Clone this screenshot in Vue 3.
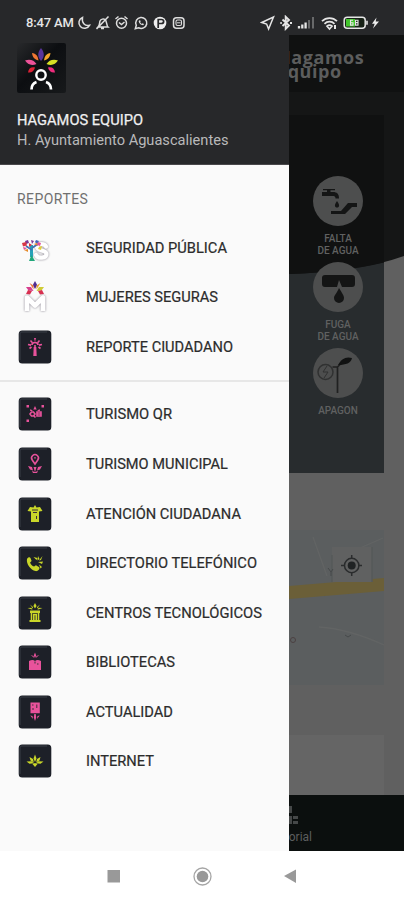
<script setup>
const pink = '#e8529b'
const lime = '#c9d629'

// Every menu glyph is drawn on a 34 x 34 grid.
const reportItems = [
  { label: 'SEGURIDAD PÚBLICA', width: 141, kind: 'tree' },
  { label: 'MUJERES SEGURAS', width: 132, kind: 'letter' },
  {
    label: 'REPORTE CIUDADANO', width: 147, kind: 'tile', color: pink,
    fill: 'M15.7 17h2.6l.4 9h-3.4z M16 8h2l-1 4z',
    line: 'M17 18v-3 M12.5 10.5l1.7 2 M21.5 10.5l-1.7 2 M10 14.5l3 .6 M24 14.5l-3 .6 M11.5 18.5l2-1.5 M22.5 18.5l-2-1.5 M14 15a3 2.5 0 0 1 6 0'
  }
]
const serviceItems = [
  {
    label: 'TURISMO QR', width: 86, kind: 'tile', color: pink,
    fill: 'M8.500 8h2.500v2.500H8.500z M23.500 8h2.500v2.500h-2.500z M8.500 22.500h2.500V25H8.500z M17 9l1.700 3.500h-3.400z M12.500 12l2.500 2h-3z M21.500 12l.500 2h-3z',
    line: 'M15.500 15h-2l-1.500 2 1.500 2h2l1.500-2z M16 19l1.500 1.500 M19 15h4v4h-4z M18.500 17h4.500'
  },
  {
    label: 'TURISMO MUNICIPAL', width: 142, kind: 'tile', color: pink,
    fill: 'M15.500 20l1.500 5 1.500-5z M10 19l4 1 1 3.500-3-1z M24 19l-4 1-1 3.500 3-1z M14 24l3 1 3-1-1 2h-4z',
    line: 'M17 17l-2.800-4a3.400 3.400 0 1 1 5.600 0z M17 10.200v1.200'
  },
  {
    label: 'ATENCIÓN CIUDADANA', width: 155, kind: 'tile', color: lime,
    fill: 'M17 8l1.500 2.500 3.500-.5 2.500 4-3.500.500V25h-8V14.500L9.500 14l2.500-4 3.500.500z',
    line: '',
    cut: 'M14 13h6 M15 15.500h4 M18.500 19v3'
  },
  {
    label: 'DIRECTORIO TELEFÓNICO', width: 171, kind: 'tile', color: lime,
    fill: 'M9 13c1-2 3-2.400 3.600-.8l1 2.800-1.500 1.400c.7 2 2 3.400 4 4.200l1.800-1.300 3.400 2c.7 2-1.200 4.100-3.800 3.800C12.700 24 8 18 9 13z M15.500 11l4 1-1 2z M20 10l1.500 3-2 1.500z M24.500 10l-1.500 4-2 .5z M20 16l5-.5-1 2.500z M21 18.500l3 2.500-1.500 1.500z',
    line: ''
  },
  {
    label: 'CENTROS TECNOLÓGICOS', width: 176, kind: 'tile', color: lime,
    fill: 'M17 7l1.600 3L17 12.500 15.400 10z M12 8.500l3 2.500v1.800z M22 8.500l-3 2.500v1.800z M9.500 12l4-.2 1 2z M24.500 12l-4-.2-1 2z M12 14.500h10V17H12z M11.500 24h11v2h-11z',
    line: 'M13.500 17v7 M20.500 17v7 M15.800 24v-5.500h2.400V24'
  },
  {
    label: 'BIBLIOTECAS', width: 89, kind: 'tile', color: pink,
    fill: 'M17 7.500l1.200 3L17 13l-1.200-2.500z M12.700 10l2.800 1 .7 2z M21.300 10l-2.800 1-.7 2z M11 16c2.500-1.500 4.500-1.500 6 0 1.500-1.500 3.500-1.500 6 0v9H11z',
    line: '',
    cut: 'M17 16.500v2 M19 19h1.500'
  },
  {
    label: 'ACTUALIDAD', width: 87, kind: 'tile', color: pink,
    fill: 'M12.500 7.500h9.300v10.700h-9.300z M16.300 19h1.400l.5 3.500L17 26l-1.200-3.500z M12.300 20.500l2.200.5.500 3z M21.700 20.500l-2.200.5-.5 3z',
    line: '',
    cut: 'M14 10h1.500 M18.800 9.500v3.500 M14 14h2'
  },
  {
    label: 'INTERNET', width: 68, kind: 'tile', color: lime,
    fill: 'M17 10.500l1.500 4L17 18l-1.500-3.500z M11.500 13l3.500 2 .8 3.500-3.300-2z M22.500 13L19 15l-.8 3.500 3.300-2z M8.500 17.500l5-.3 2.500 2-4.500.5z M25.500 17.500l-5-.3-2.500 2 4.500.5z M14.500 20l2.500-1 2.500 1-2.500 3z',
    line: ''
  }
]
const groups = [
  { id: 'reports', title: 'REPORTES', items: reportItems },
  { id: 'services', title: '', items: serviceItems }
]
const quickReports = [
  { id: 'tap', lines: ['FALTA', 'DE AGUA'] },
  { id: 'leak', lines: ['FUGA', 'DE AGUA'] },
  { id: 'lamp', lines: ['APAGON'] }
]
</script>

<template>
  <div class="phone">
    <div class="status">
      <div class="status-left">
        <span class="clock">8:47 AM</span>
        <svg width="111" height="16" viewBox="0 0 111 16" fill="none" stroke="#dedede" stroke-width="1.500">
          <path d="M6.500 2.500a5.600 5.600 0 1 0 7 7.800C8.700 11.500 5.500 7.500 6.500 2.500z" />
          <path d="M22 12h10c-1.600-1.500-1-6-3-7.500-1.500-1-4-.5-5 1.500-.7 2 0 4-2 6z M25 13.500h3 M20.500 14L32.500 1.500" />
          <circle cx="45.500" cy="8.300" r="5" />
          <path d="M39.500 4l3-2.500 M51.500 4l-3-2.500 M43 7.500l2.500 2 3-2.500" />
          <path d="M59.300 13.700l1-3.500a5.500 5.500 0 1 1 2.300 2.500z" />
          <path d="M62.700 6c0 2 2.500 4.500 4.600 4.200l.7-1.200-1.500-.8-.8.700-1.600-1.700.6-.8-.7-1.400z" fill="#dedede" stroke="none" />
          <circle cx="84" cy="8" r="6.300" fill="#eee" stroke="none" />
          <path d="M82.200 13V4.500h3.200c3 0 3 4 0 4H83" stroke="#27282a" stroke-width="1.700" />
          <rect x="97.500" y="2.700" width="10.500" height="10.600" rx="3" />
          <rect x="100" y="5" width="5.500" height="5.500" rx="1.500" stroke-width="1.100" />
          <path d="M101 7.800h3.500" stroke-width="1" />
        </svg>
      </div>
      <svg class="status-right" width="120" height="16" viewBox="0 0 120 16" fill="none" stroke="#e5e5e5" stroke-width="1.500">
        <path d="M1.700 7.500L13.500 2 8.600 14l-2-5z" />
        <path d="M22.500 4.500l6.500 6-3.300 3.300V1.800L29 5l-6.500 6 M20.300 8h1.500 M30 8h2" stroke-width="1.900" />
        <path d="M39 11v2.500 M42.300 9.500v4 M45.600 7.500v6" stroke-width="2.300" />
        <path d="M49 5v8.500 M53 2v11.500" stroke="#68696a" stroke-width="2" />
        <path d="M62 6.200a10.500 10.500 0 0 1 15 0 M64.500 8.800a7 7 0 0 1 10 0 M67 11.200a4 4 0 0 1 5 0L69.500 14z" stroke-width="1.700" />
        <path d="M75 10v4" stroke-width="2" />
        <rect x="84.200" y="2.200" width="21" height="11" rx="3" fill="#172116" />
        <path d="M86 4h9v7.500h-9z" fill="#42c52c" stroke="none" />
        <path d="M93 5.300h-2.500v4.800H93V7.800h-2.500 M95.500 5.300H98v4.800h-2.500z M95.500 7.600H98" stroke-width="1.100" />
        <path d="M107 5.800v4" stroke-width="1.600" />
        <path d="M116.500 2.500L112 8.700h2.700L113 13.500l6-7h-3.300z" fill="#eee" stroke="none" />
      </svg>
    </div>

    <div class="screen">
      <aside class="drawer">
        <header class="account">
          <svg class="logo" width="49" height="50" viewBox="0 0 49 50">
            <defs>
              <linearGradient id="logoShade" x1="0" y1="0" x2="1" y2="1">
                <stop offset="0" stop-color="#28292b" />
                <stop offset=".45" stop-color="#0c0e11" />
                <stop offset="1" stop-color="#17191b" />
              </linearGradient>
            </defs>
            <rect width="49" height="50" rx="2" fill="url(#logoShade)" />
            <path d="M24 5c3.800 5 3.600 9 0 13-3.600-4-3.800-8 0-13z" fill="#59349b" />
            <path d="M15 10c4 .5 6 3 6.500 7.500-4-.8-6-3.500-6.500-7.500z" fill="#ef7733" />
            <path d="M33.500 10c-4 .5-6 3-6.500 7.500 4-.8 6-3.500 6.500-7.500z" fill="#f4a62a" />
            <path d="M8 17.500c5-1.800 9-.3 11.500 3.500-5 2-9 .5-11.500-3.500z" fill="#ed5299" />
            <path d="M41 17.500c-5-1.800-9-.3-11.500 3.500 5 2 9 .5 11.500-3.500z" fill="#d7e124" />
            <path d="M11 29.500c.5-4 3-5.800 7-5-1 4-3.500 5.500-7 5z" fill="#db2135" />
            <path d="M38 29.500c-.5-4-3-5.800-7-5 1 4 3.500 5.500 7 5z" fill="#ee2c7d" />
            <circle cx="24" cy="32" r="4.700" fill="none" stroke="#fff" stroke-width="2.400" />
            <path d="M14.500 46.500c0-4 2-6.500 5-7.500M34 46.500c0-4-2-6.500-5-7.500" fill="none" stroke="#fff" stroke-width="2.700" />
          </svg>
          <h1><svg class="fit" width="127" height="18"><text x="0" y="13.500" textLength="126" lengthAdjust="spacingAndGlyphs">HAGAMOS EQUIPO</text></svg></h1>
          <p><svg class="fit" width="213" height="19"><text x="0" y="14" textLength="211.500" lengthAdjust="spacingAndGlyphs">H. Ayuntamiento Aguascalientes</text></svg></p>
        </header>

        <nav v-for="group in groups" :key="group.id" class="group" :class="group.id">
          <h2 v-if="group.title">{{ group.title }}</h2>
          <a v-for="item in group.items" :key="item.label" class="item">
            <svg class="glyph" width="34" height="34" viewBox="0 0 34 34">
              <g v-if="item.kind === 'tree'" transform="translate(0 5)">
                <path class="raised" d="M28 10.500c-1-3-9-3.500-9 .5 0 4.500 9.500 2.500 9.500 7 0 4.500-8.500 5-10.500 1" fill="none" stroke="#fff" stroke-width="4.200" stroke-linecap="round" />
                <path d="M13.500 21V9" stroke="#28a1b8" stroke-width="3" />
                <path d="M14 14l-6-4 M14 12l6-4" stroke="#3f70b5" stroke-width="1.700" />
                <path d="M11 25l2.500-6 3.500 6z" fill="#22a77a" />
                <path d="M7 5l3-1 1 3-3 1z M13 4l3 1-2 3z" fill="#7c3795" />
                <path d="M4 7l4-1 1 3.500-4 1z M11 7l3 2-3 2z" fill="#d83546" />
                <path d="M18 4l3 1-2 3-2-2z" fill="#4265bb" />
                <path d="M16 8l3-1 1 3z M6 14l4-1v3z" fill="#e68c2e" />
                <path d="M20 6l3 1-1 3-3-1z M5 11l4 1-3 2z" fill="#df539c" />
                <path d="M21 11l3-1-1 4-3-1z" fill="#e5cf3c" />
              </g>
              <template v-else-if="item.kind === 'letter'">
                <path d="M17 1l2.200 4-2.200 4-2.200-4z" fill="#512d91" />
                <path d="M11.500 3l4 2.500v4z" fill="#eb793a" />
                <path d="M22.500 3l-4 2.500v4z" fill="#e6a334" />
                <path d="M8 7l5 0 2.500 4-5-.5z" fill="#d63f8e" />
                <path d="M26 7l-5 0-2.500 4 5-.5z" fill="#cfcb34" />
                <path d="M8 14l2-4 4 1-2 3.500z M26 14l-2-4-4 1 2 3.500z" fill="#d93051" />
                <path class="raised" d="M9 31V17.500l8 8 8-8V31" fill="none" stroke="#fff" stroke-width="4.600" stroke-linejoin="round" />
              </template>
              <template v-else>
                <rect x=".7" y=".5" width="32.600" height="33" rx="3.500" fill="#1d2028" />
                <path d="M2 30V4q0-2 2-2h25" fill="none" stroke="#30343d" stroke-width="1.500" />
                <path :d="item.fill" :fill="item.color" />
                <path :d="item.line" fill="none" :stroke="item.color" stroke-width="1.600" />
                <path v-if="item.cut" :d="item.cut" fill="none" stroke="#3b3039" stroke-width="1" />
              </template>
            </svg>
            <svg class="fit label" :width="item.width + 2" height="20">
              <text x="0" y="15" :textLength="item.width" lengthAdjust="spacingAndGlyphs">{{ item.label }}</text>
            </svg>
          </a>
        </nav>
      </aside>

      <main class="page">
        <header class="topbar">
          <span>Hagamos</span>
          <span>Equipo</span>
        </header>
        <div class="content">
          <svg class="curve" width="115" height="381" viewBox="0 0 115 381">
            <path d="M0 23h95v358H0z" fill="#282c2e" />
            <path d="M0 0h115v164Q70 180 0 182z" fill="#151616" />
            <path d="M0 23h95v147.500Q55 180 0 182z" fill="#101111" />
          </svg>
          <section class="quick">
            <div v-for="quick in quickReports" :key="quick.id" class="quick-item">
              <svg width="50" height="50" viewBox="0 0 50 50">
                <circle cx="25" cy="25" r="25" fill="#4d4e4e" />
                <g v-if="quick.id === 'tap'" fill="#141515">
                  <path d="M10 13h12v1.200h-4.500V16H20c4 0 6 2 6 6.500h-3.500c0-2-1-2.500-3-2.500H9v-4h5v-1.800h-4z" />
                  <path d="M24 25c3 4 2.500 6.500 0 6.500s-3-2.500 0-6.500z" />
                  <path d="M18 35h10l7-8h9v4h-5l-7 7H18z" />
                </g>
                <g v-else-if="quick.id === 'leak'" fill="#141515">
                  <path d="M12 13h27q3 0 3 3v6q0 3-3 3H29l-3-7-2 7H12q-3 0-3-3v-6q0-3 3-3z" />
                  <path d="M26 26c3 5 5 7.500 5 10a5 5 0 0 1-10 0c0-2.500 3-5 5-10z" />
                </g>
                <g v-else fill="none" stroke="#202121">
                  <circle cx="12.500" cy="24" r="7.500" stroke-width="1.500" stroke="#303131" />
                  <path d="M14 18l-4 6h5l-4 6" stroke="#303131" />
                  <path d="M24.500 45V19h-5 M24.500 19l5-5" stroke-width="1.700" />
                  <path d="M25 17c3-6 8-9 14-7-1 5-6 7-14 7z" fill="#111212" stroke="none" />
                </g>
              </svg>
              <div class="quick-label">
                <span v-for="line in quick.lines" :key="line">{{ line }}</span>
              </div>
            </div>
          </section>
          <section class="map">
            <svg width="95" height="155" viewBox="0 0 95 155">
              <g fill="none" stroke="#626464" stroke-width="1.300">
                <path d="M24 7l14 39 M55 25l39-17 M30 97q30 2 65 18" />
              </g>
              <path d="M0 56l95-8v13L0 69z" fill="#6b5f38" />
              <path d="M43 17h40v35H43z" fill="#606161" />
              <path d="M83 17v35 M43 25v27" stroke="#565959" stroke-width="1.500" />
              <g fill="none" stroke="#2a2c2d" stroke-width="1.500">
                <circle cx="62.700" cy="35.500" r="7.200" />
                <path d="M62.700 25v4 M62.700 42v4 M52 35.500h4 M69 35.500h4" />
              </g>
              <circle cx="62.700" cy="35.500" r="4" fill="#202324" />
              <path d="M39 38l3 4 2-3 M42 42v4 M56 105l3 2 3-2" fill="none" stroke="#46494a" />
              <circle cx="4" cy="110" r="2.500" fill="none" stroke="#4b4142" />
            </svg>
          </section>
          <section class="card"></section>
        </div>
        <footer class="tabbar">
          <svg width="10" height="20" viewBox="0 0 10 20" fill="#454848">
            <path d="M0 0h3v7H0z M0 10h3v8H0z M4 10h5v3H4z M4 15h5v3H4z" />
          </svg>
          <span>Tutorial</span>
        </footer>
      </main>
    </div>

    <div class="navbar">
      <svg width="404" height="49" viewBox="0 0 404 49">
        <rect x="107.500" y="19" width="12.500" height="12.500" fill="#999" />
        <circle cx="202.500" cy="25.500" r="8.500" fill="none" stroke="#a5a5a5" stroke-width="1.300" />
        <circle cx="202.500" cy="25.500" r="5.800" fill="#999" />
        <path d="M284 25l12-6.500v13.500z" fill="#999" />
      </svg>
    </div>
  </div>
</template>

<style>
body {
  margin: 0;
  overflow: hidden;
}
</style>

<style scoped>
.phone {
  display: flex;
  flex-direction: column;
  width: 404px;
  height: 900px;
  overflow: hidden;
  background: #fff;
  font-family: Roboto, "Liberation Sans", sans-serif;
}
svg {
  display: block;
  flex: none;
}
.status {
  display: flex;
  justify-content: space-between;
  align-items: center;
  box-sizing: border-box;
  height: 35px;
  padding: 10px 24px 0 26px;
  background: #27282a;
  color: #e6e6e6;
}
.status-left {
  display: flex;
  align-items: center;
  gap: 2px;
}
.clock {
  width: 48px;
  font-size: 13px;
  font-weight: 500;
  white-space: nowrap;
  letter-spacing: -0.15px;
}
.screen {
  display: flex;
  height: 816px;
}
.drawer {
  width: 289px;
  background: #fafafa;
}
.account {
  box-sizing: border-box;
  height: 130px;
  padding: 8px 17px 0;
  background: #27282a;
  border-bottom: 1px solid #49484b;
}
.account h1 {
  margin: 18px 0 0;
  font-size: 15px;
  font-weight: 400;
}
.account p {
  margin: 2px 0 0;
  font-size: 14.5px;
}
.account h1 text {
  fill: #f0f0f0;
  stroke: #f0f0f0;
  stroke-width: 0.25px;
}
.account p text {
  fill: #b9b9ba;
}
.fit {
  overflow: visible;
}
.group {
  display: flex;
  flex-direction: column;
}
.reports {
  padding: 25px 0 8px;
  border-bottom: 2px solid #e7e7e7;
}
.services {
  padding-top: 8px;
}
.group h2 {
  height: 18px;
  margin: 0 0 15px 17px;
  color: #707070;
  font-size: 14px;
  font-weight: 400;
  line-height: 18px;
  letter-spacing: 0.45px;
}
.item {
  display: flex;
  align-items: center;
  gap: 34px;
  height: 49.55px;
  padding-left: 18px;
}
.raised {
  filter: drop-shadow(0 0.5px 1px #85808c);
}
.label {
  font-size: 14px;
  font-weight: 400;
}
.label text {
  fill: #2c2c2c;
  stroke: #2c2c2c;
  stroke-width: 0.2px;
}
.page {
  display: flex;
  flex-direction: column;
  width: 115px;
  overflow: hidden;
}
.topbar {
  display: flex;
  flex-direction: column;
  align-items: flex-start;
  box-sizing: border-box;
  height: 57px;
  padding-top: 15px;
  background: #101111;
  color: #5c5d5d;
  font-family: "Open Sans", sans-serif;
  font-size: 18px;
  font-weight: 700;
  line-height: 14px;
  letter-spacing: 0.55px;
}
.topbar span {
  margin-left: -12px;
}
.content {
  position: relative;
  height: 703px;
  background: #606060;
}
.curve {
  position: absolute;
  top: 0;
  left: 0;
}
.quick {
  position: relative;
  display: flex;
  flex-direction: column;
  align-items: center;
  box-sizing: border-box;
  width: 98px;
  height: 381px;
  padding-top: 84px;
}
.quick-item {
  display: flex;
  flex-direction: column;
  align-items: center;
  gap: 7px;
  height: 86px;
}
.quick-label {
  display: flex;
  flex-direction: column;
  align-items: center;
  color: #606161;
  font-size: 10px;
  font-weight: 500;
  line-height: 12px;
}
.map {
  width: 95px;
  height: 155px;
  margin-top: 57px;
  background: #5b5e5f;
}
.card {
  width: 95px;
  height: 60px;
  margin-top: 50px;
  background: #656565;
}
.tabbar {
  display: flex;
  flex-direction: column;
  box-sizing: border-box;
  height: 56px;
  padding-top: 11px;
  background: #0b0f0e;
  color: #5c5e5e;
  font-size: 12px;
  line-height: 22px;
}
.tabbar span {
  width: 23px;
  direction: rtl;
  white-space: nowrap;
}
.navbar {
  height: 49px;
}
</style>
